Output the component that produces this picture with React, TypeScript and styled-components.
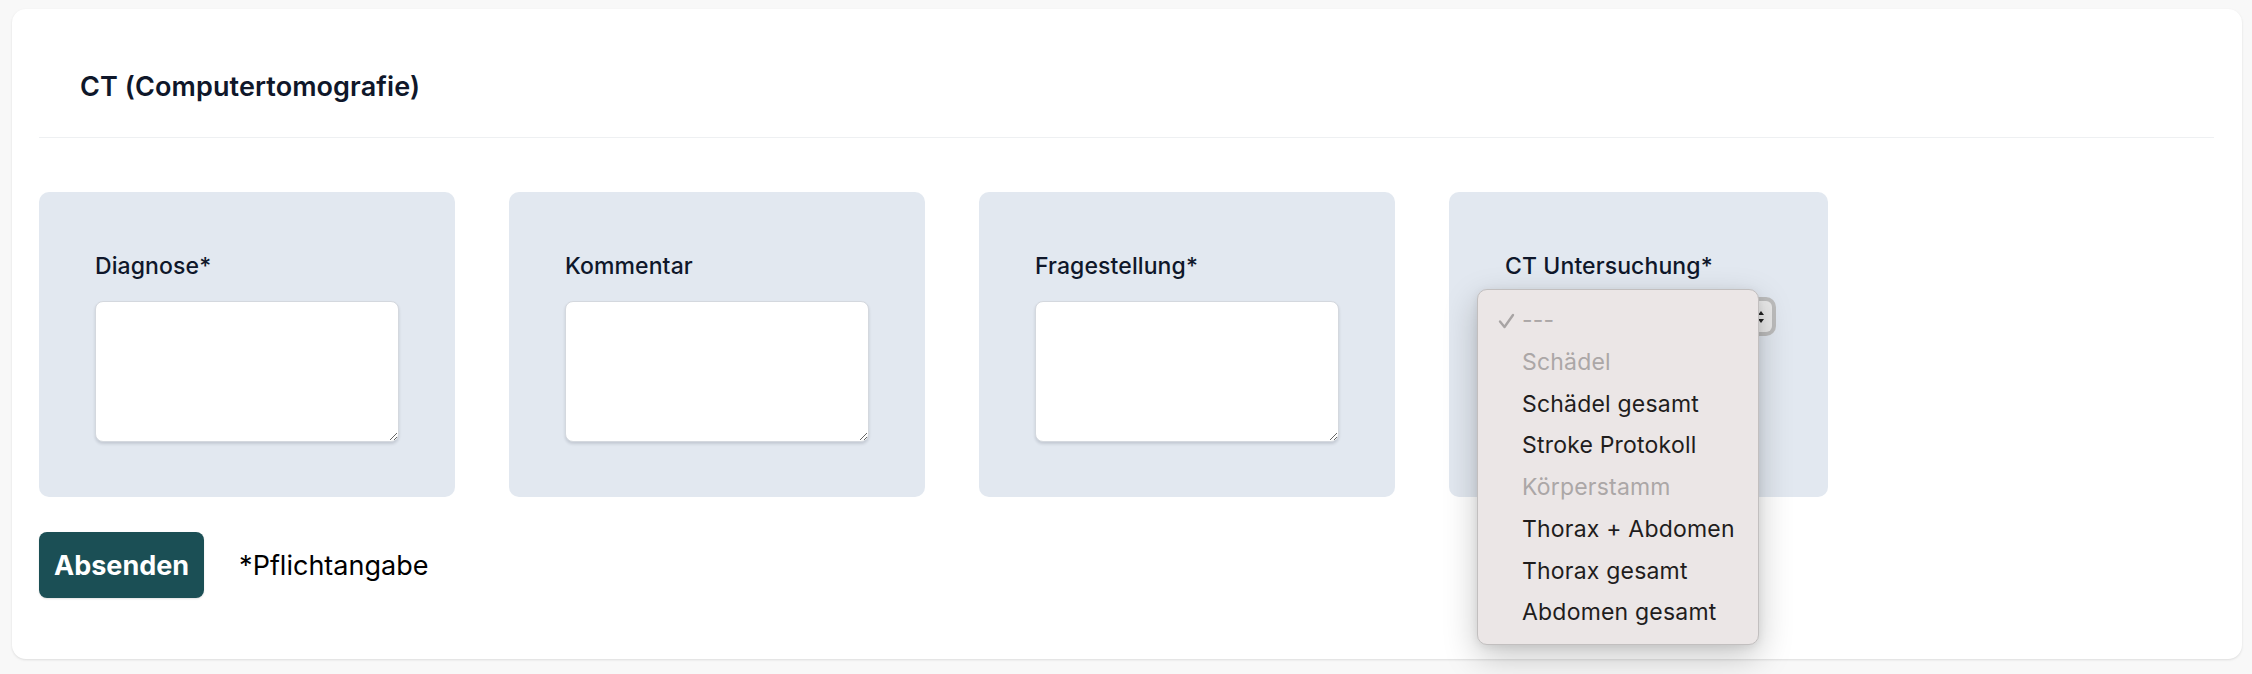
import React from "react";
import styled, { createGlobalStyle } from "styled-components";

const GlobalStyle = createGlobalStyle`
  html, body {
    margin: 0;
    padding: 0;
    background: #f8f8f8;
    font-family: Inter, "Noto Sans", sans-serif;
  }
  * { box-sizing: border-box; }
`;

const Page = styled.div`
  width: 2252px;
  height: 674px;
  padding: 9px 10px 0 12px;
`;

const Card = styled.div`
  width: 2230px;
  background: #ffffff;
  border-radius: 14px;
  box-shadow: 0 1px 3px rgba(0, 0, 0, 0.08), 0 1px 2px rgba(0, 0, 0, 0.04);
  padding: 0 28px 61px 27px;
`;

const Header = styled.div`
  padding: 58px 0 31px 41px;
  border-bottom: 1.5px solid #eef0f2;
`;

const Title = styled.h2`
  margin: 0;
  font-size: 27px;
  line-height: 39px;
  font-weight: 600;
  letter-spacing: 0.1px;
  color: #0f172a;
`;

const PanelRow = styled.div`
  display: flex;
  gap: 54px;
  margin-top: 54px;
`;

const Panel = styled.div`
  background: #e2e8f0;
  border-radius: 10px;
  padding: 57px 56px 55px 56px;
  display: flex;
  flex-direction: column;
`;

const Label = styled.label`
  display: block;
  font-size: 23px;
  line-height: 34px;
  font-weight: 500;
  letter-spacing: 0.1px;
  color: #0f172a;
  margin-bottom: 18px;
`;

const TextArea = styled.textarea`
  width: 304px;
  height: 141px;
  border: 1px solid #d4d8de;
  border-radius: 8px;
  background: #fff;
  box-shadow: 0 2px 3px rgba(15, 23, 42, 0.14);
  font-family: inherit;
  font-size: 20px;
  outline: none;
  display: block;
`;

const SelectWrap = styled.div`
  position: relative;
  width: 267px;
  height: 31px;
`;

const SelectBox = styled.div`
  width: 100%;
  height: 100%;
  border-radius: 6px;
  background: #e9e9e9;
  box-shadow: 0 0 0 4px #bdbdbd;
  display: flex;
  align-items: center;
  justify-content: flex-end;
  padding-right: 6px;
`;

const Popup = styled.ul`
  position: absolute;
  left: -28px;
  top: -12px;
  z-index: 10;
  width: 282px;
  margin: 0;
  padding: 10px 0;
  list-style: none;
  background: #ebe6e6;
  border: 1px solid #c2bfbf;
  border-radius: 10px;
  box-shadow: 0 12px 34px rgba(0, 0, 0, 0.22), 0 2px 8px rgba(0, 0, 0, 0.08);
`;

const Item = styled.li<{ $muted?: boolean }>`
  position: relative;
  padding-left: 44px;
  font-size: 23px;
  line-height: 41.75px;
  height: 41.75px;
  letter-spacing: 0.2px;
  color: ${(p) => (p.$muted ? "#aba7a7" : "#1f1d1d")};
  white-space: nowrap;
`;

const Check = styled.svg`
  position: absolute;
  left: 20px;
  top: 13px;
`;

const Footer = styled.div`
  display: flex;
  align-items: center;
  gap: 35px;
  margin-top: 35px;
`;

const Button = styled.button`
  height: 66px;
  padding: 0 15px;
  border: none;
  border-radius: 8px;
  background: #1b4f55;
  color: #ffffff;
  font-family: inherit;
  font-size: 27px;
  font-weight: 700;
  box-shadow: 0 1px 2px rgba(0, 0, 0, 0.12);
`;

const Note = styled.span`
  font-size: 27px;
  color: #000;
`;

const options: { text: string; muted?: boolean; checked?: boolean }[] = [
  { text: "---", muted: true, checked: true },
  { text: "Schädel", muted: true },
  { text: "Schädel gesamt" },
  { text: "Stroke Protokoll" },
  { text: "Körperstamm", muted: true },
  { text: "Thorax + Abdomen" },
  { text: "Thorax gesamt" },
  { text: "Abdomen gesamt" },
];

export default function App() {
  return (
    <Page>
      <GlobalStyle />
      <Card>
        <Header>
          <Title>CT (Computertomografie)</Title>
        </Header>
        <PanelRow>
          <Panel>
            <Label>Diagnose*</Label>
            <TextArea />
          </Panel>
          <Panel>
            <Label>Kommentar</Label>
            <TextArea />
          </Panel>
          <Panel>
            <Label>Fragestellung*</Label>
            <TextArea />
          </Panel>
          <Panel>
            <Label>CT Untersuchung*</Label>
            <SelectWrap>
              <SelectBox>
                <svg width="10" height="18" viewBox="0 0 10 18">
                  <path d="M2 7 L5 3 L8 7 Z" fill="#222" />
                  <path d="M2 11 L5 15 L8 11 Z" fill="#222" />
                </svg>
              </SelectBox>
              <Popup>
                {options.map((o) => (
                  <Item key={o.text} $muted={o.muted}>
                    {o.checked && (
                      <Check width="17" height="16" viewBox="0 0 17 16">
                        <path
                          d="M2 8.5 L6.5 14 L15 2"
                          stroke="#a8a4a4"
                          strokeWidth="2.4"
                          fill="none"
                          strokeLinecap="round"
                          strokeLinejoin="round"
                        />
                      </Check>
                    )}
                    {o.text}
                  </Item>
                ))}
              </Popup>
            </SelectWrap>
          </Panel>
        </PanelRow>
        <Footer>
          <Button>Absenden</Button>
          <Note>*Pflichtangabe</Note>
        </Footer>
      </Card>
    </Page>
  );
}
